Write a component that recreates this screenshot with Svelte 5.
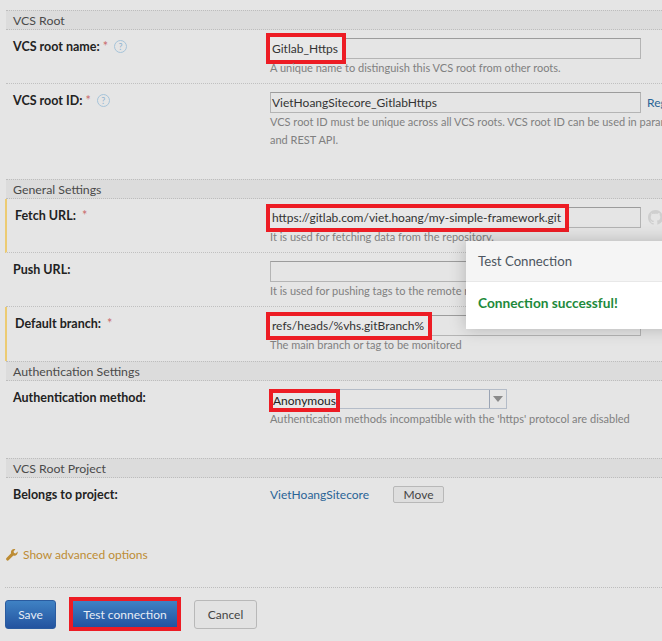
<script>
  let name = 'Gitlab_Https';
  let rootId = 'VietHoangSitecore_GitlabHttps';
  let fetchUrl = 'https://gitlab.com/viet.hoang/my-simple-framework.git';
  let branch = 'refs/heads/%vhs.gitBranch%';
</script>

<div class="page">
  <section class="form">
    <h2 class="head first">VCS Root</h2>
    <div class="row r1">
      <div class="label">VCS root name: <span class="req">*</span> <span class="help">?</span></div>
      <div class="value">
        <div class="field"><span class="mark tall">{name}</span></div>
        <p class="note">A unique name to distinguish this VCS root from other roots.</p>
      </div>
    </div>
    <div class="row r2 last">
      <div class="label">VCS root ID: <span class="req">*</span> <span class="help">?</span></div>
      <div class="value">
        <div class="with-link">
          <div class="field">{rootId}</div>
          <a href="#reg" class="link">Regenerate ID</a>
        </div>
        <p class="note">VCS root ID must be unique across all VCS roots. VCS root ID can be used in parameter references<br />and REST API.</p>
      </div>
    </div>

    <h2 class="head">General Settings</h2>
    <div class="row r1 modified">
      <div class="label">Fetch URL: &nbsp;<span class="req">*</span></div>
      <div class="value">
        <div class="with-link">
          <div class="field"><span class="mark">{fetchUrl}</span></div>
          <svg class="octo" viewBox="0 0 16 16" aria-hidden="true"><path d="M8 0C3.58 0 0 3.58 0 8c0 3.54 2.29 6.53 5.47 7.59.4.07.55-.17.55-.38v-1.34c-2.23.48-2.7-1.07-2.7-1.07-.36-.92-.89-1.17-.89-1.17-.73-.5.05-.49.05-.49.8.06 1.23.83 1.23.83.71 1.22 1.87.87 2.33.66.07-.52.28-.87.5-1.07-1.78-.2-3.64-.89-3.64-3.95 0-.87.31-1.59.82-2.15-.08-.2-.36-1.02.08-2.12 0 0 .67-.21 2.2.82A7.7 7.7 0 0 1 8 3.87c.68 0 1.36.09 2 .27 1.53-1.04 2.2-.82 2.2-.82.44 1.1.16 1.92.08 2.12.51.56.82 1.27.82 2.15 0 3.07-1.87 3.75-3.65 3.95.29.25.54.73.54 1.48v2.19c0 .21.15.46.55.38A8 8 0 0 0 16 8c0-4.42-3.58-8-8-8z" /></svg>
        </div>
        <p class="note">It is used for fetching data from the repository.</p>
      </div>
    </div>
    <div class="row r1">
      <div class="label">Push URL:</div>
      <div class="value">
        <div class="field"></div>
        <p class="note">It is used for pushing tags to the remote repository.</p>
      </div>
    </div>
    <div class="row r1 modified last">
      <div class="label">Default branch: &nbsp;<span class="req">*</span></div>
      <div class="value">
        <div class="field"><span class="mark">{branch}</span></div>
        <p class="note">The main branch or tag to be monitored</p>
      </div>
    </div>

    <h2 class="head">Authentication Settings</h2>
    <div class="row r3 last">
      <div class="label">Authentication method:</div>
      <div class="value">
        <div class="select">
          <span class="select-text"><span class="mark">Anonymous</span></span>
          <span class="arrow"></span>
        </div>
        <p class="note">Authentication methods incompatible with the 'https' protocol are disabled</p>
      </div>
    </div>

    <h2 class="head">VCS Root Project</h2>
    <div class="row r4 last">
      <div class="label">Belongs to project:</div>
      <div class="value project">
        <a href="#project" class="link">VietHoangSitecore</a>
        <button class="move" type="button">Move</button>
      </div>
    </div>
  </section>

  <a href="#advanced" class="advanced">
    <svg viewBox="0 0 12 12" aria-hidden="true"><path d="M11.6 2.6 9.7 4.4 8 4 7.6 2.3 9.4.4C8.1-.2 6.7.1 5.8 1 4.9 1.9 4.7 3.2 5.1 4.3L.5 8.9c-.6.6-.6 1.6 0 2.2.6.7 1.6.7 2.3 0l4.6-4.6c1.1.4 2.4.2 3.3-.7.9-.9 1.2-2.4.9-3.2z" /></svg>
    Show advanced options
  </a>

  <div class="actions">
    <button class="btn primary" type="button">Save</button>
    <span class="btn-mark"><button class="btn primary test" type="button">Test connection</button></span>
    <button class="btn cancel" type="button">Cancel</button>
  </div>

  <div class="dialog">
    <div class="dialog-head">Test Connection</div>
    <div class="dialog-body">Connection successful!</div>
  </div>
</div>

<style>
  :global(body) {
    margin: 0;
    background: #e5e5e5;
  }
  .page {
    position: relative;
    width: 662px;
    height: 641px;
    overflow: hidden;
    background: #e5e5e5;
    color: #333;
    font-family: Lato, "Open Sans", sans-serif;
    font-size: 12px;
    box-sizing: border-box;
    padding-top: 10px;
  }
  .form {
    margin-left: 6px;
  }
  .head {
    margin: 0;
    height: 18px;
    line-height: 19px;
    padding-left: 7px;
    font-size: 12.3px;
    font-weight: 400;
    color: #4a4a4a;
    background: #dcdcdc;
    border-top: 1px dotted #bdbdbd;
    border-bottom: 1px dotted #bdbdbd;
  }
  .row {
    display: grid;
    grid-template-columns: 257px 1fr;
    padding-left: 7px;
    padding-top: 8px;
    box-sizing: border-box;
    border-bottom: 1px dotted #c0c0c0;
  }
  .row.last {
    border-bottom: none;
  }
  .r1 { height: 54px; }
  .r2 { height: 95px; }
  .r3 { height: 77px; }
  .r4 { height: 40px; }
  .modified {
    margin-left: -1px;
    padding-left: 8px;
    border-left: 2px solid #eccb72;
    grid-template-columns: 255px 1fr;
  }
  .label {
    font-size: 12.5px;
    font-weight: 700;
    color: #222;
    line-height: 17px;
  }
  .req {
    color: #c96a6a;
    font-weight: 400;
  }
  .help {
    display: inline-block;
    width: 11px;
    height: 11px;
    line-height: 11px;
    margin-left: 3px;
    text-align: center;
    font-size: 9px;
    font-weight: 400;
    color: #90b4d0;
    border: 1px solid #a6c4da;
    border-radius: 50%;
    vertical-align: 1px;
  }
  .value {
    min-width: 0;
  }
  .field {
    width: 371px;
    height: 21px;
    line-height: 20px;
    box-sizing: border-box;
    border: 1px solid #b4b4b4;
    border-top-color: #9c9c9c;
    padding-left: 1px;
    color: #333;
    white-space: nowrap;
    flex: none;
  }
  .mark {
    display: inline-block;
    height: 20px;
    line-height: 20px;
    padding: 0 4px 0 2px;
    margin-left: -2px;
    vertical-align: top;
    outline: 4px solid #ed1c24;
    background: #e8e8e8;
  }
  .mark.tall {
    height: 23px;
    line-height: 23px;
    margin-top: -2px;
  }
  .with-link {
    display: flex;
    align-items: center;
    white-space: nowrap;
  }
  .link {
    color: #2a6496;
    text-decoration: none;
  }
  .with-link .link {
    margin-left: 6px;
  }
  .octo {
    width: 15px;
    height: 15px;
    margin-left: 7px;
    flex: none;
    fill: #cfcfcf;
  }
  .note {
    margin: 0;
    font-size: 11px;
    line-height: 18px;
    color: #808080;
    white-space: nowrap;
  }
  .select {
    display: flex;
    width: 237px;
    height: 20px;
    box-sizing: border-box;
    border: 1px solid #b4bcc8;
    margin-bottom: 1px;
  }
  .select-text {
    flex: 1;
    padding-left: 2px;
  }
  .select .mark {
    height: 15px;
    line-height: 15px;
    margin: 3px 0 0;
    padding: 0;
    color: #222;
  }
  .arrow {
    position: relative;
    width: 16px;
    border-left: 1px solid #9aa4b4;
  }
  .arrow::after {
    content: "";
    position: absolute;
    left: 3px;
    top: 6px;
    border: 5px solid transparent;
    border-top: 6px solid #8a8a8a;
    border-bottom: 0;
  }
  .project {
    display: flex;
    align-items: flex-start;
    gap: 24px;
    line-height: 17px;
  }
  .move {
    width: 51px;
    height: 17px;
    padding: 0;
    font: inherit;
    line-height: 15px;
    color: #444;
    background: #dedede;
    border: 1px solid #b8b8b8;
    border-radius: 2px;
  }
  .advanced {
    display: flex;
    align-items: center;
    gap: 5px;
    margin: 28px 0 0 6px;
    height: 17px;
    color: #bd8c34;
    text-decoration: none;
  }
  .advanced svg {
    width: 12px;
    height: 12px;
    fill: #bd8c34;
  }
  .actions {
    display: flex;
    align-items: center;
    margin: 24px 0 0 5px;
    padding-top: 9px;
    border-top: 1px dotted #bdbdbd;
  }
  .btn {
    height: 29px;
    padding: 0;
    font: inherit;
    border-radius: 3px;
    box-sizing: border-box;
  }
  .primary {
    width: 51px;
    color: #e6edf6;
    background: linear-gradient(#3f82c4, #23539f);
    border: 1px solid #2a5b9f;
  }
  .btn-mark {
    display: flex;
    margin-left: 13px;
    border: 4px solid #ed1c24;
  }
  .test {
    width: 104px;
    height: 26px;
    border-radius: 0;
    border: none;
  }
  .cancel {
    width: 63px;
    margin-left: 13px;
    color: #444;
    background: #e2e2e2;
    border: 1px solid #b8b8b8;
  }
  .dialog {
    position: absolute;
    left: 466px;
    top: 241px;
    width: 240px;
    height: 88px;
    box-shadow: 0 0 16px rgba(0, 0, 0, 0.22);
    background: #fff;
  }
  .dialog-head {
    height: 40px;
    line-height: 40px;
    padding-left: 12px;
    font-size: 13.2px;
    color: #4d5560;
    background: #f5f5f5;
    border-bottom: 1px solid #e8e8e8;
  }
  .dialog-body {
    padding: 12px 12px 0;
    font-size: 13.7px;
    line-height: 18px;
    font-weight: 700;
    color: #1e8a3c;
  }
</style>
